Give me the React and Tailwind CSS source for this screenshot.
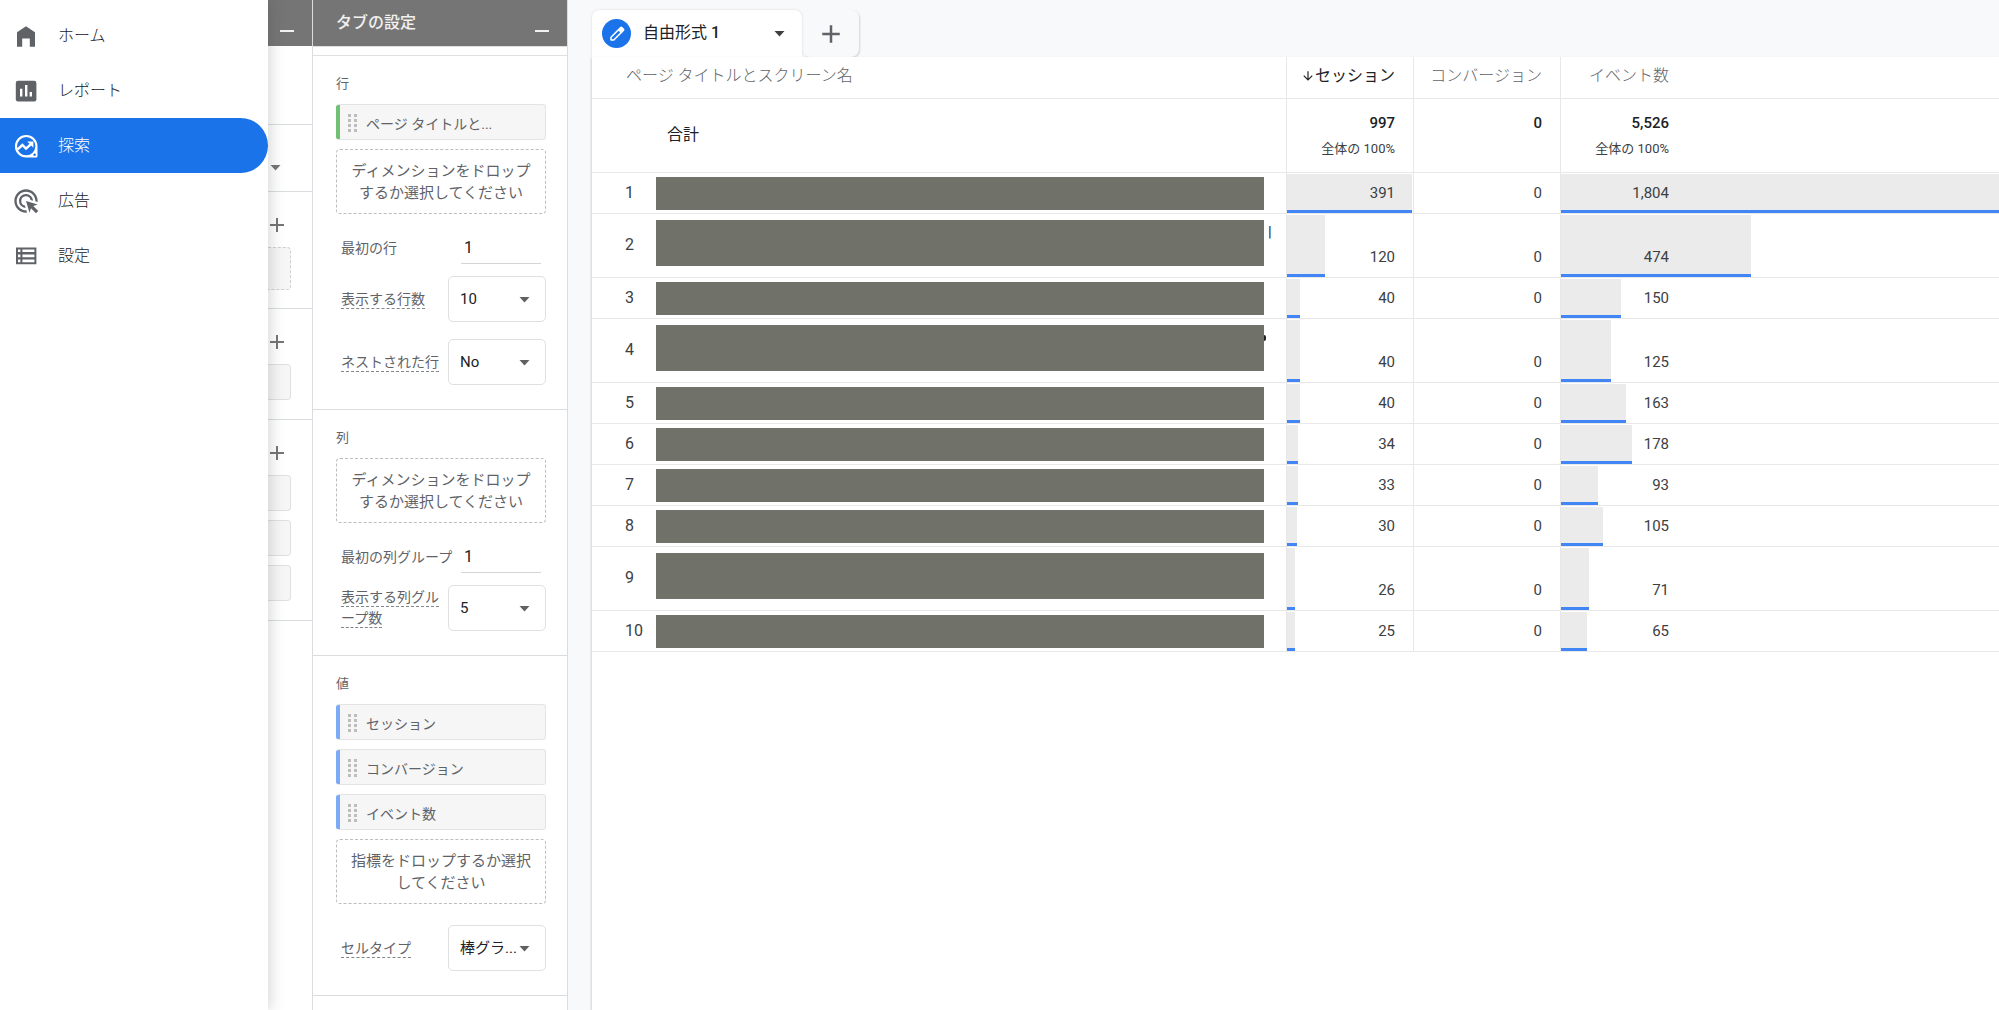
import { MdAdsClick, MdAdd, MdArrowDownward } from 'react-icons/md'

const ROWS = [
  { sessions: 391, events: 1804 },
  { sessions: 120, events: 474, tall: true, tail: 'pipe' },
  { sessions: 40, events: 150 },
  { sessions: 40, events: 125, tall: true, tail: 'dot' },
  { sessions: 40, events: 163 },
  { sessions: 34, events: 178 },
  { sessions: 33, events: 93 },
  { sessions: 30, events: 105 },
  { sessions: 26, events: 71, tall: true },
  { sessions: 25, events: 65 },
]

// bar length in px per unit of each metric
const SESSION_BAR = 125 / 391
const EVENT_BAR = 722 / 1804

function HomeIcon() {
  return (
    <svg viewBox="0 0 24 24" className="size-6" fill="currentColor">
      <path d="M12 2.3 3 8.2V22.7h5.2v-8.2h7.6v8.2H21V8.2z" />
    </svg>
  )
}

function ReportIcon() {
  return (
    <svg viewBox="0 0 24 24" className="size-6" fill="currentColor">
      <rect x="1.8" y="1.8" width="20.6" height="20.6" rx="2.2" />
      <path d="M6 9.8h2.4v7.8H6zM11 6h2.4v11.6H11zM15.6 13h2.4v4.6h-2.4z" fill="#fff" />
    </svg>
  )
}

function ExploreIcon() {
  return (
    <svg viewBox="0 0 24 24" className="size-6">
      <path d="M23.5 12.2A11.3 11.3 0 1 0 12.2 23.5h9.8a1.5 1.5 0 0 0 1.5-1.5z" fill="#fff" />
      <circle cx="12.2" cy="12.2" r="9.1" fill="#1a73e8" />
      <path d="M3.6 15.4 8.4 11l3.6 3.6 5.2-4.8" fill="none" stroke="#fff" strokeWidth="2.4" />
      <path d="M13.2 7.6h6.2v6.2z" fill="#fff" />
      <circle cx="20.6" cy="20.8" r="1.2" fill="#1a73e8" />
    </svg>
  )
}

function ListIcon() {
  return (
    <svg viewBox="0 0 24 24" className="size-6" fill="currentColor">
      <path
        fillRule="evenodd"
        d="M2 3.4h20.4v16.8H2zM4 5.4V8h2.4V5.4zM8.4 5.4V8h12V5.4zM4 10.4v2.8h2.4v-2.8zM8.4 10.4v2.8h12v-2.8zM4 15.6v2.6h2.4v-2.6zM8.4 15.6v2.6h12v-2.6z"
      />
    </svg>
  )
}

const NAV = [
  { label: 'ホーム', icon: HomeIcon },
  { label: 'レポート', icon: ReportIcon },
  { label: '探索', icon: ExploreIcon, active: true },
  { label: '広告', icon: () => <MdAdsClick size={28} className="shrink-0" /> },
  { label: '設定', icon: ListIcon },
]

function Sidebar() {
  return (
    <nav className="z-10 w-[268px] shrink-0 bg-white pt-2 shadow-[2px_0_14px_rgba(60,64,67,0.22)]">
      {NAV.map(({ label, icon: Icon, active }) => (
        <a
          key={label}
          href="#"
          className={`flex h-[55px] items-center gap-5 rounded-r-full pl-3.5 text-base font-light ${
            active ? 'bg-[#1a73e8] text-white' : 'text-[#5f6368]'
          }`}
        >
          <span className="flex size-6 items-center justify-center">
            <Icon />
          </span>
          <span className={active ? 'text-white' : 'text-[#202124]'}>{label}</span>
        </a>
      ))}
    </nav>
  )
}

function Caret({ className }) {
  return (
    <svg viewBox="0 0 10 6" className={`h-1.5 w-[11px] ${className}`} fill="currentColor">
      <path d="M0 0h10L5 5.5z" />
    </svg>
  )
}

function Minus() {
  return <span className="block h-0.5 w-3.5 bg-white/90" />
}

function AddButton({ label }) {
  return (
    <button type="button" aria-label={label} className="flex size-[18px] items-center justify-center text-[#757575]">
      <MdAdd size={24} className="shrink-0" />
    </button>
  )
}

// The strip of the variables column that stays visible beside the menu.
function VariablesPanel() {
  return (
    <section className="w-[45px] shrink-0 border-r border-[#dadce0] bg-white">
      <div className="flex h-[46px] justify-end bg-[#757575] pt-[30px] pr-[18px]">
        <Minus />
      </div>
      <div className="h-[79px] border-b border-[#dadce0]" />
      <div className="flex h-[67px] items-center border-b border-[#dadce0] pt-5 pl-0.5">
        <Caret className="text-[#757575]" />
      </div>
      <div className="h-[117px] border-b border-[#dadce0] pt-6">
        <AddButton label="セグメントを追加" />
        <div className="mt-[13px] mr-[21px] h-[43px] rounded-r-sm border border-l-0 border-dashed border-[#d0d0d0] bg-[#f6f6f6]" />
      </div>
      <div className="h-[111px] border-b border-[#dadce0] pt-6">
        <AddButton label="ディメンションを追加" />
        <div className="mt-[13px] mr-[21px] h-9 rounded-r-sm border border-l-0 border-[#e0e0e0] bg-[#f6f6f6]" />
      </div>
      <div className="flex h-[201px] flex-col gap-[9px] border-b border-[#dadce0] pt-6">
        <AddButton label="指標を追加" />
        <div className="mt-1 mr-[21px] h-9 rounded-r-sm border border-l-0 border-[#e0e0e0] bg-[#f6f6f6]" />
        <div className="mr-[21px] h-9 rounded-r-sm border border-l-0 border-[#e0e0e0] bg-[#f6f6f6]" />
        <div className="mr-[21px] h-9 rounded-r-sm border border-l-0 border-[#e0e0e0] bg-[#f6f6f6]" />
      </div>
    </section>
  )
}

function Chip({ children, color }) {
  return (
    <div className="flex h-9 overflow-hidden rounded-[3px] border border-l-0 border-[#e4e4e4] bg-[#f6f6f6] text-sm text-[#5f6368]">
      <span className={`w-1 ${color}`} />
      <svg viewBox="0 0 9 20" className="mt-2 ml-2 h-5 w-[9px]" fill="#bdbdbd">
        {[1, 6, 11, 16].map((y) => (
          <g key={y}>
            <rect x="0" y={y} width="3" height="3" />
            <rect x="6" y={y} width="3" height="3" />
          </g>
        ))}
      </svg>
      <span className="ml-[9px] pt-[3px] leading-[32px]">{children}</span>
    </div>
  )
}

function DropZone({ children }) {
  return (
    <div className="h-[65px] rounded-[4px] border border-dashed border-[#bdbdbd] px-3 pt-2.5 text-center text-[15px] leading-[22px] text-[#5f6368]">
      {children}
    </div>
  )
}

function NumberField({ id, label }) {
  return (
    <div className="mt-[18px] flex h-8 items-center justify-between pr-[5px] pl-[5px]">
      <label htmlFor={id} className="text-sm whitespace-nowrap text-[#5f6368]">
        {label}
      </label>
      <input
        id={id}
        defaultValue="1"
        className="h-8 w-20 shrink-0 border-b border-[#d5d5d5] px-[3px] text-base text-[#202124] outline-none"
      />
    </div>
  )
}

function SelectField({ id, label, value, className }) {
  return (
    <div className={`flex h-[46px] items-center justify-between pl-[5px] ${className}`}>
      <label htmlFor={id} className="w-[101px] text-sm leading-[21px] text-[#5f6368]">
        <span className="border-b border-dashed border-[#80868b] pb-px">{label}</span>
      </label>
      <div className="relative">
        <select
          id={id}
          className="h-[46px] w-[98px] appearance-none rounded-[5px] border border-[#e0e0e0] bg-white pl-[11px] text-[15px] text-[#202124]"
        >
          <option>{value}</option>
        </select>
        <Caret className="pointer-events-none absolute top-[21px] right-4 text-[#616161]" />
      </div>
    </div>
  )
}

function Section({ title, children }) {
  return (
    <section className="border-b border-[#dadce0] pt-[18px] pr-[21px] pb-6 pl-[23px]">
      <h3 className="mb-2.5 text-[13px] leading-5 text-[#5f6368]">{title}</h3>
      {children}
    </section>
  )
}

function TabSettings() {
  return (
    <section className="w-[255px] shrink-0 border-r border-[#dadce0] bg-white">
      <div className="flex h-[46px] justify-between bg-[#757575] pr-[18px] pl-[23px]">
        <h2 className="pt-[11px] text-base leading-6 font-medium text-white/90">タブの設定</h2>
        <button type="button" aria-label="最小化" className="self-start pt-[30px]">
          <Minus />
        </button>
      </div>
      <div className="h-2.5 border-y border-[#e0e0e0]" />
      <Section title="行">
        <Chip color="bg-[#71c174]">ページ タイトルと...</Chip>
        <div className="mt-[9px]">
          <DropZone>
            ディメンションをドロップ
            <br />
            するか選択してください
          </DropZone>
        </div>
        <NumberField id="first-row" label="最初の行" />
        <SelectField id="row-count" label="表示する行数" value="10" className="mt-3" />
        <SelectField id="nested" label="ネストされた行" value="No" className="mt-[17px]" />
      </Section>
      <Section title="列">
        <DropZone>
          ディメンションをドロップ
          <br />
          するか選択してください
        </DropZone>
        <NumberField id="first-col" label="最初の列グループ" />
        <SelectField id="col-count" label="表示する列グループ数" value="5" className="mt-3" />
      </Section>
      <Section title="値">
        <div className="flex flex-col gap-[9px]">
          <Chip color="bg-[#7baaf7]">セッション</Chip>
          <Chip color="bg-[#7baaf7]">コンバージョン</Chip>
          <Chip color="bg-[#7baaf7]">イベント数</Chip>
          <DropZone>
            指標をドロップするか選択
            <br />
            してください
          </DropZone>
        </div>
        <SelectField id="cell-type" label="セルタイプ" value="棒グラ..." className="mt-[21px]" />
      </Section>
    </section>
  )
}

function Tabs() {
  return (
    <div className="flex h-[57px] pt-2.5">
      <button
        type="button"
        className="flex w-[210px] items-center rounded-t-lg bg-white pr-[17px] pl-2.5 text-base text-[#202124] shadow-[0_0_3px_rgba(60,64,67,0.15)]"
      >
        <span className="flex size-[29px] items-center justify-center rounded-full bg-[#1a73e8]">
          <svg viewBox="0 0 16 16" className="size-4" fill="none" stroke="#fff" strokeWidth="1.5" strokeLinejoin="round">
            <path d="M2 14v-2.8l7.6-7.6 2.8 2.8L4.8 14z" />
            <path d="m10.4 2.8 1.3-1.3q.5-.4 1 0l1.8 1.8q.4.5 0 1l-1.3 1.3z" fill="#fff" />
          </svg>
        </span>
        <span className="ml-3 pb-0.5">
          自由形式 <span className="font-medium">1</span>
        </span>
        <Caret className="ml-auto text-[#3c4043]" />
      </button>
      <button
        type="button"
        aria-label="タブを追加"
        className="flex w-[57px] items-center justify-center rounded-lg text-[#5f6368] shadow-[1px_1px_2px_rgba(60,64,67,0.2)]"
      >
        <MdAdd size={30} />
      </button>
    </div>
  )
}

function BarCell({ value, scale, className, textClassName }) {
  return (
    <td className={`relative overflow-hidden pb-2.5 align-bottom ${className}`}>
      <div
        className="absolute inset-y-0 left-0 mt-px max-w-full border-b-3 border-[#4285f4] bg-[#ebebeb]"
        style={{ width: Math.round(value * scale) }}
      />
      <div className={`relative ${textClassName}`}>{value.toLocaleString('en-US')}</div>
    </td>
  )
}

function ReportTable() {
  return (
    <table className="w-full table-fixed border-separate border-spacing-0 text-[15px] leading-5 text-[#3c4043] [&_td]:border-b [&_td]:border-[#e8e8e8] [&_th]:border-b [&_th]:border-[#e8e8e8]">
      <colgroup>
        <col className="w-[64px]" />
        <col className="w-[631px]" />
        <col className="w-[127px]" />
        <col className="w-[147px]" />
        <col />
      </colgroup>
      <thead>
        <tr className="h-[42px] text-right text-base text-[#80868b]">
          <th colSpan={2} className="border-r pb-1 pl-[34px] text-left font-light text-[#5f6368]">
            ページ タイトルとスクリーン名
          </th>
          <th className="border-r pr-[18px] pb-1 font-normal text-[#202124]">
            <span className="flex items-center justify-end">
              <MdArrowDownward size={14} />
              セッション
            </span>
          </th>
          <th className="border-r pr-[18px] pb-1 font-light text-[#5f6368]">コンバージョン</th>
          <th className="pb-1 pl-7 text-left font-light text-[#5f6368]">イベント数</th>
        </tr>
      </thead>
      <tbody>
        <tr className="h-[74px] text-right align-top text-[#202124]">
          <td colSpan={2} className="border-r pb-0.5 pl-[75px] text-left align-middle text-base">
            合計
          </td>
          <td className="border-r pt-3.5 pr-[18px]">
            <div className="font-medium">997</div>
            <div className="mt-1.5 text-[13px] text-[#3c4043]">全体の 100%</div>
          </td>
          <td className="border-r pt-3.5 pr-[18px] font-medium">0</td>
          <td className="pt-3.5">
            <div className="w-[108px]">
              <div className="font-medium">5,526</div>
              <div className="mt-1.5 text-[13px] text-[#3c4043]">全体の 100%</div>
            </div>
          </td>
        </tr>
        {ROWS.map((row, i) => (
          <tr key={i} className={`text-right ${row.tall ? 'h-16' : 'h-[41px]'}`}>
            <td className="pb-px pl-[33px] text-left text-base">{i + 1}</td>
            <td className="border-r align-top">
              <div className={`flex ${row.tall ? 'pt-1.5' : 'pt-1'}`}>
                <div className={`flex-1 bg-[#70726a] ${row.tall ? 'h-[46px]' : 'h-[33px]'}`} />
                <div className="flex w-[22px] text-[#202124]">
                  {row.tail === 'pipe' && <span className="ml-1 pt-0.5">|</span>}
                  {row.tail === 'dot' && <span className="mt-2.5 h-1.5 w-0.5 rounded-r-full bg-[#202124]" />}
                </div>
              </div>
            </td>
            <BarCell value={row.sessions} scale={SESSION_BAR} className="border-r" textClassName="pr-[18px]" />
            <td className="border-r pr-[18px] pb-2.5 align-bottom">0</td>
            <BarCell value={row.events} scale={EVENT_BAR} textClassName="w-[108px]" />
          </tr>
        ))}
      </tbody>
    </table>
  )
}

export default function App() {
  return (
    <div className="flex min-h-screen bg-[#f8f9fb] [font-family:Roboto,'Noto_Sans_CJK_JP',sans-serif]" lang="ja">
      <Sidebar />
      <VariablesPanel />
      <TabSettings />
      <main className="flex min-w-0 flex-1 flex-col pl-6">
        <Tabs />
        <div className="flex-1 bg-white shadow-[-1px_1px_2px_rgba(60,64,67,0.2)]">
          <ReportTable />
        </div>
      </main>
    </div>
  )
}
